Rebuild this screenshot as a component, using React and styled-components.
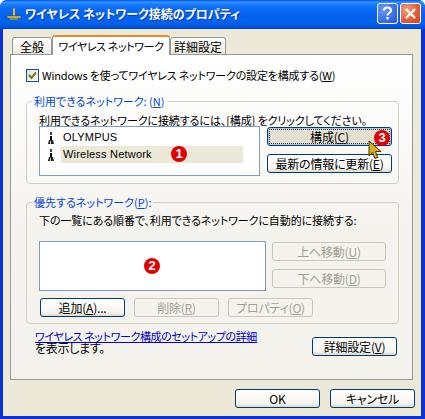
import React from 'react';
import styled, { createGlobalStyle } from 'styled-components';

const Global = createGlobalStyle`
  html, body { margin: 0; padding: 0; background: #fff; }
  * { box-sizing: border-box; }
`;

const Window = styled.div`
  width: 425px;
  height: 419px;
  display: flex;
  flex-direction: column;
  background: #0831d9;
  border-radius: 7px 7px 0 0;
  font-family: "Noto Sans CJK JP", "Liberation Sans", sans-serif;
  font-feature-settings: "palt";
  font-size: 12px;
  color: #000;
  overflow: hidden;
`;

const TitleBar = styled.div`
  height: 29px;
  flex: none;
  display: flex;
  align-items: center;
  padding: 0 4px 2px 6px;
  background: linear-gradient(#0058ee 0%, #3593ff 8%, #1a7dff 14%, #0a6af5 30%, #0362ee 55%, #0263ec 75%, #0058e6 90%, #0046c8 100%);
`;

const TitleText = styled.span`
  margin-left: 3px;
  flex: 1;
  color: #fff;
  font-weight: 700;
  font-size: 12px;
  text-shadow: 1px 1px 0 #0b3aa8;
  white-space: nowrap;
`;

const CaptionButton = styled.div`
  width: 21px;
  height: 21px;
  margin-left: 2px;
  border: 1px solid #fff;
  border-radius: 3px;
  display: flex;
  align-items: center;
  justify-content: center;
  background: ${({ $close }) =>
    $close
      ? 'radial-gradient(circle at 30% 30%, #f0a080, #e2603a 55%, #d63a18)'
      : 'radial-gradient(circle at 30% 30%, #6f9bf5, #3a6fe8 60%, #2150d6)'};
`;

const Body = styled.div`
  flex: 1;
  margin: 0 4px 3px 3px;
  padding: 6px 5px 0 7px;
  background: #ece9d8;
  display: flex;
  flex-direction: column;
  position: relative;
`;

const TabRow = styled.div`
  display: flex;
  align-items: flex-end;
  height: 20px;
  margin-left: 2px;
  position: relative;
  z-index: 1;
  margin-bottom: -1px;
`;

const Tab = styled.div`
  height: ${({ $active }) => ($active ? '20px' : '18px')};
  width: ${({ $w }) => $w}px;
  border: 1px solid #919b9c;
  border-bottom: ${({ $active }) => ($active ? 'none' : '1px solid #919b9c')};
  border-top: ${({ $active }) => ($active ? '2px solid #e68b2c' : '1px solid #919b9c')};
  border-radius: 3px 3px 0 0;
  background: ${({ $active }) => ($active ? '#fff' : 'linear-gradient(#fff, #f3f1e8 70%, #e8e5d8)')};
  display: flex;
  align-items: center;
  justify-content: center;
  white-space: nowrap;
  font-size: ${({ $active }) => ($active ? '11px' : '12px')};
  letter-spacing: ${({ $active }) => ($active ? '-0.4px' : '0')};
`;

const Panel = styled.div`
  width: 403px;
  height: 326px;
  border: 1px solid #919b9c;
  background: linear-gradient(#fff, #f4f3ee 55%, #f3f2ec);
  padding: 12px 14px 0 15px;
  display: flex;
  flex-direction: column;
  position: relative;
`;

const CheckRow = styled.label`
  display: flex;
  align-items: center;
  height: 16px;
  gap: 3px;
  white-space: nowrap;
  font-size: 11px;
  letter-spacing: -0.2px;
`;

const CheckBox = styled.span`
  width: 13px;
  height: 13px;
  border: 1px solid #1c5180;
  background: linear-gradient(135deg, #dcdcd7, #fff);
  display: flex;
  align-items: center;
  justify-content: center;
`;

const Group = styled.fieldset`
  margin: ${({ $top }) => $top}px 0 0;
  padding: 0 6px 0 12px;
  width: 373px;
  height: ${({ $h }) => $h}px;
  border: 1px solid #d0d0bf;
  border-radius: 4px;
  position: relative;
`;

const Legend = styled.legend`
  margin-left: -7px;
  padding: 0 2px;
  color: #0046d5;
  line-height: 14px;
  font-size: 11px;
`;

const GroupText = styled.div`
  height: 13px;
  margin-top: ${({ $top }) => $top}px;
  line-height: 16px;
  white-space: nowrap;
  font-size: 11px;
  letter-spacing: -0.1px;
`;

const SplitRow = styled.div`
  display: flex;
  align-items: flex-start;
  margin-top: ${({ $top }) => $top}px;
  gap: ${({ $gap }) => $gap}px;
`;

const ListBox = styled.div`
  width: ${({ $w }) => $w}px;
  height: 50px;
  border: 1px solid #7f9db9;
  background: #fff;
  padding: 2px 0 0 6px;
  flex: none;
  position: relative;
`;

const ListRow = styled.div`
  display: flex;
  align-items: center;
  height: 17px;
`;

const RowLabel = styled.span`
  margin-left: 5px;
  padding-left: 2px;
  width: 182px;
  height: 17px;
  line-height: 17px;
  font-family: "Liberation Sans", sans-serif;
  font-size: 11px;
  letter-spacing: 0.2px;
  background: ${({ $selected }) => ($selected ? '#ece9d8' : 'transparent')};
`;

const ButtonColumn = styled.div`
  display: flex;
  flex-direction: column;
  gap: 8px;
  margin-top: ${({ $top }) => $top || 0}px;
`;

const ButtonRow = styled.div`
  display: flex;
  gap: ${({ $gap }) => $gap || 9}px;
  margin: ${({ $top }) => $top || 0}px 0 0 ${({ $left }) => $left || 0}px;
`;

const Button = styled.div`
  width: ${({ $w }) => $w || 85}px;
  height: 19px;
  flex: none;
  border: 1px solid ${({ $disabled }) => ($disabled ? '#c9c7ba' : '#003c74')};
  border-radius: 3px;
  display: flex;
  align-items: center;
  justify-content: center;
  white-space: nowrap;
  letter-spacing: -0.2px;
  color: ${({ $disabled }) => ($disabled ? '#a1a192' : '#000')};
  background: ${({ $disabled }) =>
    $disabled ? '#f4f3ee' : 'linear-gradient(#fff, #f5f4ee 80%, #dcd8c9)'};
  ${({ $focused }) =>
    $focused &&
    `
    background: #e3e0d2;
    box-shadow: inset 0 0 0 1px #a9c4ee;
    outline: 1px dotted #333;
    outline-offset: -3px;
  `}
  u { text-underline-offset: 1px; }
`;

const FooterRow = styled.div`
  display: flex;
  justify-content: space-between;
  align-items: flex-end;
  margin: 6px 0 0 9px;
  width: 362px;
`;

const FooterText = styled.div`
  margin-bottom: 2px;
`;

const Link = styled.div`
  color: #0000cc;
  text-decoration: underline;
  line-height: 12px;
  white-space: nowrap;
  font-size: 11px;
  letter-spacing: -0.4px;
`;

const Note = styled.div`
  line-height: 12px;
  letter-spacing: -0.3px;
`;

const DialogButtons = styled.div`
  display: flex;
  justify-content: flex-end;
  gap: 10px;
  margin: 9px 1px 0 0;
`;

const Badge = styled.span`
  position: absolute;
  left: ${({ $x }) => $x}px;
  top: ${({ $y }) => $y}px;
  width: 16px;
  height: 16px;
  border-radius: 50%;
  background: #e00000;
  color: #fff;
  font: 700 13px/16px "Liberation Sans", sans-serif;
  text-align: center;
  z-index: 3;
`;

const Cursor = styled.svg`
  position: absolute;
  left: 357px;
  top: 85px;
  z-index: 4;
`;

const NetworkIcon = () => (
  <svg width="16" height="16" viewBox="0 0 16 16">
    <path d="M7 2h2v8H7z" fill="#f2e6a0" stroke="#5a5a20" strokeWidth="0.6" />
    <path d="M1 10h14v2H1z" fill="#e8d060" stroke="#4a4a20" strokeWidth="0.6" />
    <path d="M4 12h8v2H4z" fill="#8a8a50" />
  </svg>
);

const AntennaIcon = () => (
  <svg width="10" height="14" viewBox="0 0 10 14">
    <path d="M4 1h2v3H4z" fill="#444" />
    <path d="M4 5h2v4H4z" fill="#000" />
    <path d="M3 9h4l1 4H2z" fill="#222" />
    <path d="M4 10h1v3H4z" fill="#ccc" />
  </svg>
);

const App = () => (
  <>
    <Global />
    <Window>
      <TitleBar>
        <NetworkIcon />
        <TitleText>ワイヤレス ネットワーク接続のプロパティ</TitleText>
        <CaptionButton>
          <svg width="13" height="15" viewBox="0 0 13 15">
            <path d="M3 4.5C3 2.5 4.6 1.5 6.5 1.5S10 2.6 10 4.4c0 2.4-3.4 2.4-3.4 5" fill="none" stroke="#fff" strokeWidth="2" />
            <path d="M5.5 11h2.2v2.4H5.5z" fill="#fff" />
          </svg>
        </CaptionButton>
        <CaptionButton $close>
          <svg width="13" height="13" viewBox="0 0 13 13">
            <path d="M2 2l9 9M11 2l-9 9" stroke="#fff" strokeWidth="2.2" />
          </svg>
        </CaptionButton>
      </TitleBar>
      <Body>
        <TabRow>
          <Tab $w={40}>全般</Tab>
          <Tab $w={118} $active>ワイヤレス ネットワーク</Tab>
          <Tab $w={56}>詳細設定</Tab>
        </TabRow>
        <Panel>
          <CheckRow>
            <CheckBox>
              <svg width="9" height="9" viewBox="0 0 9 9">
                <path d="M1 4l2.5 3L8 1.5" fill="none" stroke="#6f7a14" strokeWidth="2" />
              </svg>
            </CheckBox>
            <span>Windows を使ってワイヤレス ネットワークの設定を構成する(<u>W</u>)</span>
          </CheckRow>
          <Group $top={11} $h={90}>
            <Legend>利用できるネットワーク: (<u>N</u>)</Legend>
            <GroupText $top={4}>利用できるネットワークに接続するには、[構成] をクリックしてください。</GroupText>
            <SplitRow $top={1} $gap={7}>
              <ListBox $w={221}>
                <ListRow>
                  <AntennaIcon />
                  <RowLabel>OLYMPUS</RowLabel>
                </ListRow>
                <ListRow>
                  <AntennaIcon />
                  <RowLabel $selected>Wireless Network</RowLabel>
                </ListRow>
              </ListBox>
              <ButtonColumn $top={1}>
                <Button $w={125} $focused>構成(<u>C</u>)</Button>
                <Button $w={125}>最新の情報に更新(<u>E</u>)</Button>
              </ButtonColumn>
            </SplitRow>
            <Badge $x={144} $y={38}>1</Badge>
          </Group>
          <Group $top={11} $h={129}>
            <Legend>優先するネットワーク(<u>P</u>):</Legend>
            <GroupText $top={3}>下の一覧にある順番で、利用できるネットワークに自動的に接続する:</GroupText>
            <SplitRow $top={16} $gap={6}>
              <ListBox $w={227}>
                <Badge $x={104} $y={16}>2</Badge>
              </ListBox>
              <ButtonColumn $top={1}>
                <Button $w={114} $disabled>上へ移動(<u>U</u>)</Button>
                <Button $w={114} $disabled>下へ移動(<u>D</u>)</Button>
              </ButtonColumn>
            </SplitRow>
            <ButtonRow $top={7} $left={1}>
              <Button>追加(<u>A</u>)...</Button>
              <Button $disabled>削除(<u>R</u>)</Button>
              <Button $disabled>プロパティ(<u>O</u>)</Button>
            </ButtonRow>
          </Group>
          <FooterRow>
            <FooterText>
              <Link>ワイヤレス ネットワーク構成のセットアップの詳細</Link>
              <Note>を表示します。</Note>
            </FooterText>
            <Button>詳細設定(<u>V</u>)</Button>
          </FooterRow>
          <Badge $x={363} $y={75}>3</Badge>
          <Cursor width="14" height="20" viewBox="0 0 14 20">
            <path d="M1 1v15l3.5-3.5 2.5 6 3-1.2-2.6-5.8H13z" fill="#d8b020" stroke="#3a3000" strokeWidth="1" />
          </Cursor>
        </Panel>
        <DialogButtons>
          <Button>OK</Button>
          <Button>キャンセル</Button>
        </DialogButtons>
      </Body>
    </Window>
  </>
);

export default App;
